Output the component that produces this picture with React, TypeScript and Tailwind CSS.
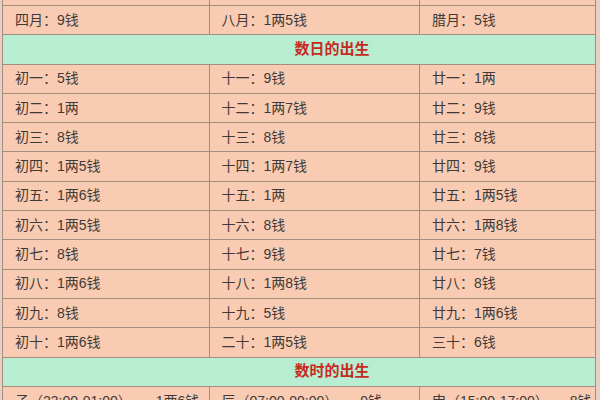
const monthRows: string[][] = [
  ["三月：1两8钱", "七月：9钱", "十一月：9钱"],
  ["四月：9钱", "八月：1两5钱", "腊月：5钱"],
];

const dayRows: string[][] = [
  ["初一：5钱", "十一：9钱", "廿一：1两"],
  ["初二：1两", "十二：1两7钱", "廿二：9钱"],
  ["初三：8钱", "十三：8钱", "廿三：8钱"],
  ["初四：1两5钱", "十四：1两7钱", "廿四：9钱"],
  ["初五：1两6钱", "十五：1两", "廿五：1两5钱"],
  ["初六：1两5钱", "十六：8钱", "廿六：1两8钱"],
  ["初七：8钱", "十七：9钱", "廿七：7钱"],
  ["初八：1两6钱", "十八：1两8钱", "廿八：8钱"],
  ["初九：8钱", "十九：5钱", "廿九：1两6钱"],
  ["初十：1两6钱", "二十：1两5钱", "三十：6钱"],
];

// time, weight, spacing before the weight
const hourRow: [string, string, string][] = [
  ["子（23:00-01:00）", "1两6钱", "gap-[24px]"],
  ["辰（07:00-09:00）", "9钱", "gap-[22px]"],
  ["申（15:00-17:00）", "8钱", "gap-[21px]"],
];

function Row({ cells }: { cells: string[] }) {
  return (
    <div className="grid h-[29.3px] grid-cols-[206.5px_210.5px_1fr] border-b border-[#a48e80]">
      {cells.map((text, i) => (
        <div
          key={i}
          className={`flex items-center pl-[12px] ${i < 2 ? "border-r border-[#a48e80]" : ""}`}
        >
          {text}
        </div>
      ))}
    </div>
  );
}

function SectionHeader({ title }: { title: string }) {
  return (
    <div className="flex h-[29.3px] items-center justify-center border-b border-[#a48e80] bg-[#b7eed2] pl-[66px] text-[15px] font-bold text-[#c62a1e]">
      {title}
    </div>
  );
}

export default function App() {
  return (
    <div
      className="h-[400px] w-[600px] overflow-hidden bg-[#e9cfc2] px-[2px] text-[14px] text-[#3f3a37]"
      style={{ fontFamily: '"Liberation Sans", "Noto Sans CJK SC", sans-serif' }}
    >
      <div className="-mt-[23.3px] w-[594px] border-x border-[#a48e80] bg-[#f9cbb2]">
        {monthRows.map((r, i) => (
          <Row key={i} cells={r} />
        ))}
        <SectionHeader title="数日的出生" />
        {dayRows.map((r, i) => (
          <Row key={i} cells={r} />
        ))}
        <SectionHeader title="数时的出生" />
        <div className="grid h-[29.3px] grid-cols-[206.5px_210.5px_1fr] border-b border-[#a48e80]">
          {hourRow.map(([time, weight, gap], i) => (
            <div
              key={i}
              className={`flex items-center pl-[12px] ${gap} ${i < 2 ? "border-r border-[#a48e80]" : ""}`}
            >
              <span>{time}</span>
              <span>{weight}</span>
            </div>
          ))}
        </div>
      </div>
    </div>
  );
}
